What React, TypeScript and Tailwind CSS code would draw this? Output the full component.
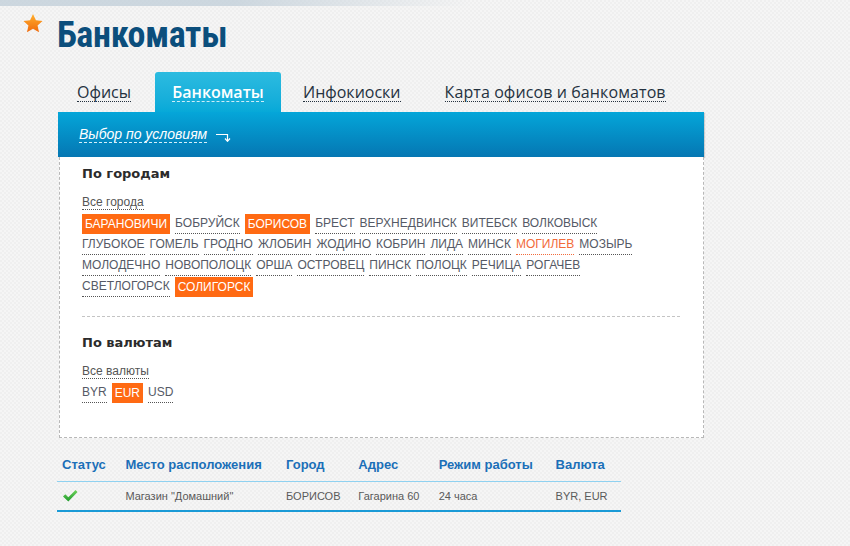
import React from 'react';

interface City {
  name: string;
  active?: boolean;
  hot?: boolean;
}

const cities: City[][] = [
  [
    { name: 'БАРАНОВИЧИ', active: true },
    { name: 'БОБРУЙСК' },
    { name: 'БОРИСОВ', active: true },
    { name: 'БРЕСТ' },
    { name: 'ВЕРХНЕДВИНСК' },
    { name: 'ВИТЕБСК' },
    { name: 'ВОЛКОВЫСК' },
  ],
  [
    { name: 'ГЛУБОКОЕ' },
    { name: 'ГОМЕЛЬ' },
    { name: 'ГРОДНО' },
    { name: 'ЖЛОБИН' },
    { name: 'ЖОДИНО' },
    { name: 'КОБРИН' },
    { name: 'ЛИДА' },
    { name: 'МИНСК' },
    { name: 'МОГИЛЕВ', hot: true },
    { name: 'МОЗЫРЬ' },
  ],
  [
    { name: 'МОЛОДЕЧНО' },
    { name: 'НОВОПОЛОЦК' },
    { name: 'ОРША' },
    { name: 'ОСТРОВЕЦ' },
    { name: 'ПИНСК' },
    { name: 'ПОЛОЦК' },
    { name: 'РЕЧИЦА' },
    { name: 'РОГАЧЕВ' },
  ],
  [{ name: 'СВЕТЛОГОРСК' }, { name: 'СОЛИГОРСК', active: true }],
];

const currencies: City[] = [{ name: 'BYR' }, { name: 'EUR', active: true }, { name: 'USD' }];

function Chip({ item }: { item: City }) {
  if (item.active) {
    return <span className="bg-[#ff6a13] px-[3px] leading-[20px] text-white">{item.name}</span>;
  }
  return (
    <span
      className={
        'border-b border-dotted leading-[19px] ' +
        (item.hot ? 'border-[#f26b3a] text-[#f26b3a]' : 'border-[#555] text-[#555a66]')
      }
    >
      {item.name}
    </span>
  );
}

function Star() {
  return (
    <svg width="22" height="21" viewBox="0 0 24 23">
      <defs>
        <linearGradient id="star" x1="0" y1="0" x2="0" y2="1">
          <stop offset="0" stopColor="#ffb02e" />
          <stop offset="1" stopColor="#f06a0c" />
        </linearGradient>
      </defs>
      <path
        d="M12 1l3.2 7 7.3.7-5.5 4.9 1.6 7.4L12 17.2 5.4 21l1.6-7.4L1.5 8.7 8.8 8z"
        fill="url(#star)"
      />
    </svg>
  );
}

function CornerArrow() {
  return (
    <svg width="16" height="10" viewBox="0 0 16 10" className="ml-[8px] mt-[4px]">
      <path d="M1 2.5h11.5v6" stroke="#fff" strokeWidth="1.2" fill="none" />
      <path d="M10 6.5l2.5 2.8 2.5-2.8" stroke="#fff" strokeWidth="1.2" fill="none" />
    </svg>
  );
}

function Check() {
  return (
    <svg width="16" height="14" viewBox="0 0 16 14">
      <defs>
        <linearGradient id="chk" x1="0" y1="0" x2="0" y2="1">
          <stop offset="0" stopColor="#6fd35a" />
          <stop offset="1" stopColor="#1e9a2c" />
        </linearGradient>
      </defs>
      <path d="M1 7.5l2.3-2.2 3 3L13.6 1 15.5 3 6.3 12.5z" fill="url(#chk)" />
    </svg>
  );
}

export default function App() {
  const cols = [
    { title: 'Статус', w: 'w-[64px]' },
    { title: 'Место расположения', w: 'w-[162px]' },
    { title: 'Город', w: 'w-[73px]' },
    { title: 'Адрес', w: 'w-[81px]' },
    { title: 'Режим работы', w: 'w-[118px]' },
    { title: 'Валюта', w: 'w-[66px]' },
  ];

  return (
    <div className="min-h-[546px] w-[850px] bg-[#f3f3f3] bg-[repeating-conic-gradient(#f5f5f5_0_25%,#efefef_0_50%)] bg-size-[4px_4px] font-['Liberation_Sans',Arial,sans-serif]">
      {/* top shadow strip */}
      <div className="h-[6px] w-[470px] bg-gradient-to-r from-[#c3d0da] via-[#c3d0da] to-transparent opacity-80" />

      {/* page heading */}
      <div className="flex items-start pl-[22px] pt-[7px]">
        <Star />
        <h1 className="ml-[13px] mt-[1px] font-['Liberation_Sans_Narrow','Roboto_Condensed','Liberation_Sans',sans-serif] text-[36px] leading-[42px] font-bold tracking-[-0.3px] text-[#0b4e7c]">
          Банкоматы
        </h1>
      </div>

      <div className="ml-[58px] w-[646px]">
        {/* tabs */}
        <div className="mt-[16px] flex h-[40px] items-end font-['Open_Sans','Noto_Sans',sans-serif] text-[16px] text-[#25323f]">
          <div className="flex h-[40px] items-center pl-[19px] pr-[24px]">
            <span className="border-b border-dotted border-[#25323f] leading-[18px]">Офисы</span>
          </div>
          <div className="flex h-[40px] w-[126px] items-center justify-center rounded-t-[3px] bg-gradient-to-b from-[#2bbbe0] to-[#06a9d8] font-semibold text-white">
            <span className="border-b border-dashed border-[#cdeef8] leading-[18px]">Банкоматы</span>
          </div>
          <div className="flex h-[40px] items-center pl-[22px] pr-[44px]">
            <span className="border-b border-dotted border-[#25323f] leading-[18px]">Инфокиоски</span>
          </div>
          <div className="flex h-[40px] items-center">
            <span className="border-b border-dotted border-[#25323f] leading-[18px] tracking-[0.1px]">
              Карта офисов и банкоматов
            </span>
          </div>
        </div>

        {/* blue condition bar */}
        <div className="flex h-[45px] items-center bg-gradient-to-b from-[#05a6d9] to-[#0577b3] pl-[21px] shadow-[1px_1px_1px_rgba(0,0,0,0.15)]">
          <span className="border-b border-dashed border-[#d5effa] text-[14px] leading-[16px] text-white italic">
            Выбор по условиям
          </span>
          <CornerArrow />
        </div>

        {/* filter panel */}
        <div className="ml-[1px] border-x border-b border-dashed border-[#b8b8b8] bg-white pt-[7px] pb-[33px] pl-[22px] pr-[23px]">
          <div className="font-['DejaVu_Sans',Verdana,sans-serif] text-[13px] font-bold text-[#2b2b2b]">По городам</div>
          <div className="mt-[11px] text-[12px] leading-[15px] text-[#555]">
            <span className="border-b border-dotted border-[#555]">Все города</span>
          </div>
          <div className="mt-[4px] text-[12px]">
            {cities.map((row, i) => (
              <div key={i} className="flex h-[21px] items-start gap-[5px]">
                {row.map((c) => (
                  <Chip key={c.name} item={c} />
                ))}
              </div>
            ))}
          </div>

          <div className="mt-[18px] border-t border-dashed border-[#c4c4c4]" />

          <div className="mt-[16px] font-['DejaVu_Sans',Verdana,sans-serif] text-[13px] font-bold text-[#2b2b2b]">По валютам</div>
          <div className="mt-[12px] text-[12px] leading-[15px] text-[#555]">
            <span className="border-b border-dotted border-[#555]">Все валюты</span>
          </div>
          <div className="mt-[4px] flex h-[21px] items-start gap-[5px] text-[12px]">
            {currencies.map((c) => (
              <Chip key={c.name} item={c} />
            ))}
          </div>
        </div>

        {/* results table */}
        <div className="mt-[10px] w-[564px] -ml-[1px]">
          <div className="flex h-[34px] items-center border-b border-[#8fd1f0] pl-[5px] text-[13px] font-bold text-[#1b6fb8]">
            {cols.map((c) => (
              <div key={c.title} className={c.w}>
                {c.title}
              </div>
            ))}
          </div>
          <div className="flex h-[30px] items-center border-b-2 border-[#1a9ad6] pl-[5px] text-[11px] text-[#5a5a5a]">
            <div className={cols[0].w}>
              <Check />
            </div>
            <div className={cols[1].w}>Магазин "Домашний"</div>
            <div className={cols[2].w}>БОРИСОВ</div>
            <div className={cols[3].w}>Гагарина 60</div>
            <div className={cols[4].w}>24 часа</div>
            <div className={cols[5].w}>BYR, EUR</div>
          </div>
        </div>
      </div>
    </div>
  );
}
